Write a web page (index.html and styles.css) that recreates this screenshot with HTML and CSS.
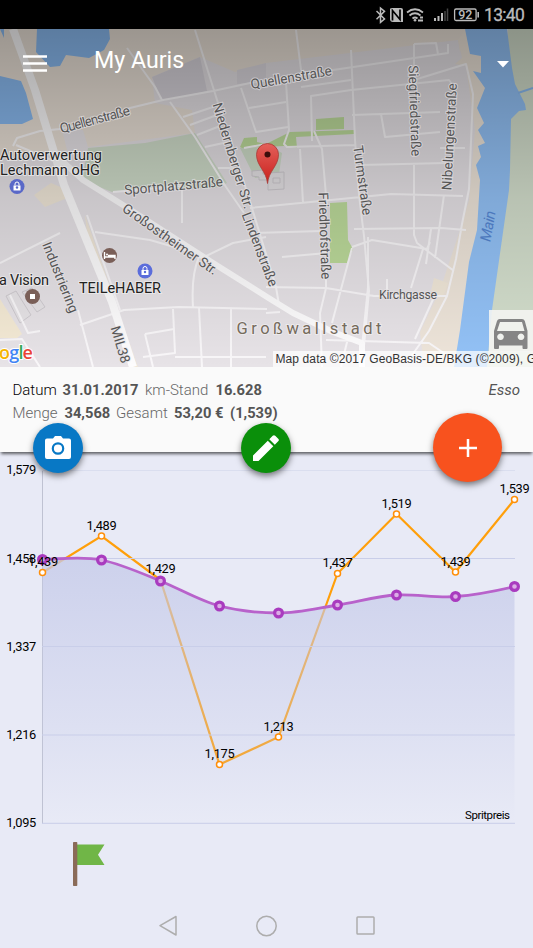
FILE: index.html
```html
<!DOCTYPE html>
<html lang="de">
<head>
<meta charset="utf-8">
<title>My Auris</title>
<link rel="stylesheet" href="styles.css">
</head>
<body>
<div class="screen">
  <div class="status">
    <svg class="status-icons" width="104" height="20" viewBox="376 5 104 20">
      <path d="M376.500 11l8 8-4 3.300V8l4 3.300-8 8" fill="none" stroke="#bbb" stroke-width="1.500"/>
      <path d="M391 8h10q2 0 2 2v12h-10q-3 0-3-3V9z" fill="#bbb"/>
      <path d="M392.500 20.500v-10l7.500 9v-10" fill="none" stroke="#000" stroke-width="1.700"/>
      <g fill="none" stroke="#bbb" stroke-width="1.700"><path d="M407 12.500q8-6.500 16 0M409.500 15.500q5.500-4.500 11 0M412.500 18.500q2.500-2 5 0"/></g>
      <circle cx="415" cy="20.300" r="1.300" fill="#bbb"/><path d="M418 20.500h5M420 17.500h3" stroke="#bbb" stroke-width="2"/>
      <path d="M435 21v-3M438.500 21v-5M442 21v-8" stroke="#bbb" stroke-width="2"/>
      <path d="M445 21V11M447.500 21V8.500" stroke="#444" stroke-width="1.500"/>
      <rect x="454.600" y="9" width="21.500" height="11.500" rx="1.500" fill="none" stroke="#bbb" stroke-width="1.300"/>
      <path d="M478.200 12v5.500" stroke="#bbb" stroke-width="1.600"/>
      <text x="465.300" y="18.800" class="battery" text-anchor="middle">92</text>
    </svg>
    <span class="clock">13:40</span>
  </div>

  <div class="map">
    <svg class="map-art" width="533" height="338" viewBox="0 29 533 338">
      <defs>
        <linearGradient id="shade" x1="0" y1="0" x2="0" y2="1">
          <stop offset="0" stop-color="#000" stop-opacity=".34"/><stop offset=".5" stop-color="#000" stop-opacity=".13"/><stop offset="1" stop-color="#000" stop-opacity="0"/>
        </linearGradient>
        <linearGradient id="pin" x1="0" y1="0" x2="0" y2="1"><stop offset="0" stop-color="#e4605a"/><stop offset="1" stop-color="#c9201c"/></linearGradient>
      </defs>
      <rect y="29" width="533" height="338" fill="#e7e3e7"/>
      <path d="M0 29H466L460 52 458 40 316 57 266 63 235 72 200 57 152 77 155 103 192 110 195 133 88 147 83 130 62 130 67 150 0 158z" fill="#ece3d9"/>
      <path d="M88 148L145 143 195 133 227 183 215 188 140 189 112 192 82 180z" fill="#d0ddca"/>
      <path d="M152 77L200 57 207 91 162 101z" fill="#d8d4db"/>
      <path d="M237 70l29-7v18l-29 3z" fill="#dedae0"/>
      <path d="M240 148h33l9 5-3 21-24 4z" fill="#cfddc9"/>
      <path d="M458 40L462 58 455 64 466 66 475 130 469 200 460 230 440 290 420 332 424 367H455L490 200V29H465z" fill="#eee5da"/>
      <path d="M508 29H533V367H485z" fill="#d4dfcd"/>
      <path d="M465 29H507L512 68 515 84 525 104 526 110 519 111 511 119 510 170 509 190 492 310 487 367H454L460 330 469 262 477 230 480 180 476 165 481 157 478 146 485 143 478 130 484 123 477 108 485 88 473 71 481 73 481 56 470 54z" fill="#93c2f7"/>
      <path d="M37 29H109L110 39 104 50 89 58 66 55 60 66 50 67 36 52zM0 76l21 5 5 12 7 26-11 5H0zM0 29h4v9z" fill="#8bbcf3"/>
      <path d="M518 93l15-5" stroke="#8bbcf3" stroke-width="2"/>
      <path d="M34 195l17-12 14 6 5 8-25 10zM85 215l53 152h-8L87 235zM434 278l14 5-5 14-12-6z" fill="#f1e8d9"/>
      <path d="M0 299l22 35-5 4H0z" fill="#f4ead5"/>
      <path d="M316 119l28-2v12l-28 1zM330 203l17-1 1 38 5 9-6 14H330zM240 147l4-9 13-1v5l9 2 24-12 64-2v4l-58 3 1 11-13-2-42 2z" fill="#bddb9b"/>
      <g fill="#e6e3e6" stroke="#cfcbd0"><path d="M6 296l10-5 15 24-11 8zM22 292l10-4 13 19-8 5zM252 171l11-1v4h5l1 6h-10v-3l-7-1zM268 173l16-1v17l-16 1z"/><path d="M273 178h7v5h-7z"/></g>

      <g class="streets">
        <path d="M13 146L17 138 40 131 60 129 90 122 130 108 163 100 213 91 250 83 333 70 448 53V44M16 145l40 17M127 48l28 39 7 13M195 30l23 73 30 92 28 92 3 18M170 102l25 35 31 50 18 26M183 117l30-10M190 125l27-10M197 135l23-9M205 147l23-5M218 168h18M244 148l22-4M241 88l15 44 32-5M249 108l37-6"/>
        <path d="M296 30l5 40M351 50l4 90 4 55 5 41 5 55-5 55-4 15M286 82l3 48-5 14 3 3 68-2M312 141l-1-45 40-6 98-10 3 4M301 87l50-7M314 131l8 18 5 58M300 149l3 54M352 115l88-3M381 114l4 23 55-5M414 44l22-1 2 11M414 44v36l52-16 7 30-4 95-7 35-6 35-9 37-18 35-21 30M414 165v70l3 8 37 28M360 165l86-2M250 208l71-7 70-7 72 2M354 229l87-1 25 2M440 148h25M431 229l-5 35M444 195l-9 63M352 247l20-7 55 9 3-7M423 249l-12 39M252 233l69-2M282 257l45-4M266 287l60 1 48 8h73M326 261v27l-6 25 2 54M352 248l-20 75M368 237v50l-6 60M387 279v15M435 295l-20 44M266 313l14-1M326 340l103 3 25 17M348 338l-7 29"/>
        <path d="M0 263l60-30M95 232l55 8 52 15M204 257l29-14 33-6M199 257q-8 18-6 50M80 325l44-15 55-3 88 2M78 310l15 57M173 309l2 44-32 4M145 334l29-5M145 334l8 33M199 308l3 59M231 309v58M175 357h91M0 340l22-1 18 28M10 295l18 38 12-2M87 215l33 95M182 190v33M113 192l69-6"/>
      </g>
      <path d="M13 29L35 90 64 185 112 302 133 367" class="road wide"/>
      <path d="M50 150L83 180 123 205 213 263 267 297 293 313 333 332 362 343V367" class="road"/>

      <rect y="29" width="533" height="338" fill="url(#shade)"/>
      <g class="labels" text-anchor="middle">
        <text transform="translate(96 124) rotate(-15)" textLength="72">Quellenstraße</text>
        <text transform="translate(292 82) rotate(-10)" textLength="82">Quellenstraße</text>
        <text transform="translate(228.500 157) rotate(73)" textLength="110">Niedernberger Str.</text>
        <text transform="translate(255.500 251) rotate(69)" textLength="78">Lindenstraße</text>
        <text transform="translate(174 190.500) rotate(-5)" textLength="99">Sportplatzstraße</text>
        <text transform="translate(167.500 243) rotate(35)" textLength="113">Großostheimer Str.</text>
        <text transform="translate(56 279) rotate(68)" textLength="75">Industriering</text>
        <text transform="translate(116 346) rotate(73)" textLength="38">MIL38</text>
        <text transform="translate(320 236) rotate(88)" textLength="87">Friedhofstraße</text>
        <text transform="translate(358 181) rotate(82)" textLength="70">Turmstraße</text>
        <text transform="translate(410 111) rotate(88)" textLength="91">Siegfriedstraße</text>
        <text transform="translate(454 137) rotate(-87)" textLength="107">Nibelungenstraße</text>
        <text x="408" y="298.500" class="small" textLength="58">Kirchgasse</text>
        <text transform="translate(493 227) rotate(-80)" class="river" textLength="31">Main</text>
        <text x="309" y="334" class="town" textLength="145">Großwallstadt</text>
      </g>
      <g class="places">
        <text x="0" y="160" textLength="102">Autoverwertung</text>
        <text x="0" y="174.500" textLength="100">Lechmann oHG</text>
        <text x="-1" y="285" textLength="50">a Vision</text>
        <text x="79" y="293" textLength="82">TEILeHABER</text>
      </g>
      <g>
        <circle cx="17" cy="186.500" r="7.500" fill="#5968c8"/><path d="M13.500 185.500h7v5h-7z" fill="#fff"/><path d="M15 185.500v-1.500a2 2 0 0 1 4 0v1.500" fill="none" stroke="#fff"/><circle cx="17" cy="187.500" r="1.200" fill="#5968c8"/>
        <circle cx="145" cy="271" r="7.500" fill="#5b6ddb"/><path d="M141.500 270h7v5h-7z" fill="#fff"/><path d="M143 270v-1.500a2 2 0 0 1 4 0v1.500" fill="none" stroke="#fff"/><circle cx="145" cy="272" r="1.200" fill="#5b6ddb"/>
        <circle cx="109.500" cy="255.500" r="7.500" fill="#7a5f58"/><path d="M104.500 252v7M104.500 257h10.500v2M108 255.500h7v2" stroke="#fff" fill="none" stroke-width="1.400"/><circle cx="107" cy="254.500" r="1" fill="#fff"/>
        <circle cx="32.500" cy="296.500" r="7.500" fill="#7a5f58"/><rect x="30" y="294" width="5" height="5" fill="#fff"/>
      </g>
      <path d="M267.500 183.500C266.500 171 256.500 166 256.500 154.500a11 11 0 0 1 22 0C278.500 166 268.500 171 267.500 183.500z" fill="url(#pin)" stroke="#a83a36" stroke-width=".8"/>
      <circle cx="267.500" cy="154.500" r="3" fill="#3d0d0b"/>
      <text y="359" x="-1" class="logo"><tspan fill="#f5b400">o</tspan><tspan fill="#4285f4">g</tspan><tspan fill="#34a853">l</tspan><tspan fill="#ea4335">e</tspan></text>
      <path d="M273 351H533v16H273z" fill="#fff" opacity=".72"/>
      <path d="M489 310H533v42H489z" fill="#f5f5f3" opacity=".88"/>
      <text x="275.500" y="363" class="credit">Map data ©2017 GeoBasis-DE/BKG (©2009), G</text>
      <path fill="#858585" fill-rule="evenodd" d="M499.500 319h22.500q2 0 2.800 2l2.700 10v17q0 1-1 1h-3q-1 0-1-1v-2.500h-23.500v2.500q0 1-1 1h-3q-1 0-1-1V331l3-10q.8-2 2.500-2zM500 322l-3 9h27.500l-2.500-9zM500.500 333.500a3.300 3.300 0 1 0 .01 0zM521 333.500a3.300 3.300 0 1 0 .01 0z"/>
    </svg>
    <header class="appbar">
      <svg width="24" height="18" viewBox="0 0 24 18"><path d="M0 1.500h24M0 8.500h24M0 15.500h24" stroke="#fff" stroke-width="2.500"/></svg>
      <h1>My Auris</h1>
      <svg class="caret" width="12" height="7" viewBox="0 0 12 7"><path d="M0 0h12L6 6.500z" fill="#fff"/></svg>
    </header>
  </div>

  <section class="card">
    <div class="line"><span class="dark w-date">Datum</span><b class="w-dval">31.01.2017</b><span class="w-km">km-Stand</span><b>16.628</b><em>Esso</em></div>
    <div class="line"><span class="w-menge">Menge</span><b class="w-mval">34,568</b><span class="w-sum">Gesamt</span><b class="w-sval">53,20 €</b><b>(1,539)</b></div>
    <button class="fab photo" aria-label="Foto"><svg width="26" height="24" viewBox="0 0 26 24"><path d="M2 2.500h6L10 0h6l2 2.500h6q2 0 2 2V21q0 2-2 2H2q-2 0-2-2V4.500q0-2 2-2z" fill="#fff"/><circle cx="13" cy="12.500" r="5.200" fill="#fff" stroke="#0878c5" stroke-width="2.200"/></svg></button>
    <button class="fab edit" aria-label="Bearbeiten"><svg width="26" height="26" viewBox="0 0 26 26"><path d="M0 20.500L14.800 5.700l5.500 5.500L5.500 26H0zM16.300 4.200L19.700.8q1.300-1.200 2.500 0l3 3q1.300 1.200 0 2.500l-3.400 3.400z" fill="#fff"/></svg></button>
    <button class="fab add" aria-label="Neu"><svg width="18" height="18" viewBox="0 0 18 18"><path d="M0 9h18M9 0v18" stroke="#fff" stroke-width="2.500"/></svg></button>
  </section>

  <svg class="chart" width="533" height="380" viewBox="0 452 533 380">
    <defs><linearGradient id="area" x1="0" y1="0" x2="0" y2="1"><stop offset="0" stop-color="#c5cae9" stop-opacity=".78"/><stop offset=".65" stop-color="#c5cae9" stop-opacity=".3"/><stop offset="1" stop-color="#c5cae9" stop-opacity="0"/></linearGradient></defs>
    <path d="M42 470.500H515" stroke="#dadeef"/>
    <path d="M42.500 471V823.500" stroke="#bfc2d2"/>
    <path d="M42.500 572.500L101.500 536 160.500 580 219.500 764.500 278.500 737 337.500 573.500 396.500 514 455.500 572 514.500 499.500" fill="none" stroke="#ff9f0a" stroke-width="2.200"/>
    <path d="M42.500 559.500C62 559 82 556 101.500 560S141 573 160.500 581 200 601 219.500 606 259 613 278.500 613 318 608 337.500 605 377 596 396.500 595 436 598 455.500 596.500 500 590 514.500 586.500V823H42.500z" fill="url(#area)"/>
    <path d="M42 558.500H515M42 646.500H515M42 735H515M42 823.300H515" stroke="#c9cee9"/>
    <path d="M42.500 559.500C62 559 82 556 101.500 560S141 573 160.500 581 200 601 219.500 606 259 613 278.500 613 318 608 337.500 605 377 596 396.500 595 436 598 455.500 596.500 500 590 514.500 586.500" fill="none" stroke="#b862cb" stroke-width="2.800"/>
    <g fill="#dcaee6" stroke="#a93bbf" stroke-width="3.200"><circle cx="42.500" cy="559.500" r="3.900"/><circle cx="101.500" cy="560" r="3.900"/><circle cx="160.500" cy="581" r="3.900"/><circle cx="219.500" cy="606" r="3.900"/><circle cx="278.500" cy="613" r="3.900"/><circle cx="337.500" cy="605" r="3.900"/><circle cx="396.500" cy="595" r="3.900"/><circle cx="455.500" cy="596.500" r="3.900"/><circle cx="514.500" cy="586.500" r="3.900"/></g>
    <g fill="#fff" stroke="#ff8f0a" stroke-width="1.500"><circle cx="42.500" cy="572.500" r="3"/><circle cx="101.500" cy="536" r="3"/><circle cx="219.500" cy="764.500" r="3"/><circle cx="278.500" cy="737" r="3"/><circle cx="337.500" cy="573.500" r="3"/><circle cx="396.500" cy="514" r="3"/><circle cx="455.500" cy="572" r="3"/><circle cx="514.500" cy="499.500" r="3"/></g>
    <g class="ticks" text-anchor="end"><text x="36" y="474">1,579</text><text x="36" y="562.500">1,458</text><text x="36" y="650.500">1,337</text><text x="36" y="739">1,216</text><text x="36" y="827">1,095</text></g>
    <g class="ticks" text-anchor="middle"><text x="43" y="566">1,439</text><text x="101.500" y="529.500">1,489</text><text x="160.500" y="573">1,429</text><text x="219.500" y="758">1,175</text><text x="278.500" y="730.500">1,213</text><text x="337.500" y="567">1,437</text><text x="396.500" y="507.500">1,519</text><text x="455.500" y="565.500">1,439</text><text x="514.500" y="493">1,539</text></g>
    <text x="465" y="818.500" class="series" textLength="45">Spritpreis</text>
  </svg>

  <div class="marker"><svg width="32" height="45" viewBox="0 0 32 45"><path d="M4 2.500H31.500L25 12.700 31.500 23H4z" fill="#70b647"/><rect width="4.300" height="44" rx=".7" fill="#8a6b58"/></svg></div>

  <nav class="nav">
    <svg width="216" height="22" viewBox="0 0 216 22"><g fill="none" stroke="#adadad" stroke-width="1.500" stroke-linejoin="round"><path d="M17 1.500v18.500L1 10.700z"/><circle cx="107.500" cy="11" r="9.700"/><rect x="198" y="2" width="17" height="17" rx=".8"/></g></svg>
  </nav>
</div>
</body>
</html>
```
FILE: styles.css
```css
* { box-sizing: border-box; }
body { margin: 0; font-family: Roboto, "Liberation Sans", sans-serif; }
.screen { width: 533px; height: 948px; display: flex; flex-direction: column; background: #e8eaf6; overflow: hidden; }
.status { height: 29px; background: #000; display: flex; justify-content: flex-end; align-items: center; gap: 4px; padding: 1px 9px 0 0; color: #bbb; }
.battery { font-size: 12.500px; font-weight: 500; fill: #bbb; }
.clock { font-size: 17.500px; width: 40px; letter-spacing: -.7px; white-space: nowrap; -webkit-text-stroke: .3px #bbb; }
.map { height: 338px; position: relative; flex: none; }
.map-art { display: block; }
.appbar { position: absolute; inset: 0 0 auto 0; height: 66px; display: flex; align-items: center; padding: 4px 24px 0 23px; color: #fff; }
.appbar h1 { margin: -8px 0 0 47px; font-size: 23.200px; font-weight: 400; line-height: 30px; }
.caret { margin-left: auto; }
.streets path { fill: none; stroke: #f9f7f9; stroke-width: 2; stroke-linejoin: round; }
.road { fill: none; stroke: #fdfcfd; stroke-width: 6; stroke-linejoin: round; }
.wide { stroke-width: 8; }
.labels text { font-size: 13.600px; fill: #555; paint-order: stroke; stroke: #e5e2e5; stroke-width: 2px; stroke-opacity: .6; }
.labels .small { font-size: 12.300px; }
.labels .river { font-size: 15px; font-style: italic; fill: #4c78bd; stroke: none; }
.labels .town { font-size: 16.500px; fill: #756b5c; stroke: #f5f3f5; }
.places text { font-size: 14.500px; fill: #222; paint-order: stroke; stroke: #eee; stroke-width: 2px; stroke-opacity: .7; }
.logo { font: 600 18px "Open Sans", sans-serif; paint-order: stroke; stroke: #fff; stroke-width: 2px; letter-spacing: -.8px; }
.credit { font: 12px "Liberation Sans", sans-serif; fill: #333; letter-spacing: .1px; }
.card { height: 85px; flex: none; position: relative; z-index: 1; background: #fafafa; box-shadow: 0 3px 3px -1px rgba(0,0,0,.6); padding: 12px 13px 0 12.500px; }
.line { height: 23px; line-height: 23px; display: flex; font-size: 15px; font-weight: 300; color: #666; white-space: nowrap; }
.line b { font-size: 14.700px; font-weight: 700; letter-spacing: 0; color: #555; }
.line em { margin-left: auto; font-weight: 400; color: #555; }
.line .dark { color: #000; }
.w-date { width: 50px; }
.w-dval { width: 82.500px; }
.w-km { width: 70.500px; }
.w-menge { width: 52px; }
.w-mval { width: 51.500px; }
.w-sum { width: 58px; }
.w-sval { width: 56px; }
.fab { position: absolute; border: 0; padding: 0; border-radius: 50%; display: flex; align-items: center; justify-content: center; width: 50px; height: 50px; top: 56px; box-shadow: 0 3px 6px rgba(0,0,0,.5); }
.photo { left: 33px; background: #0878c5; }
.edit { left: 241px; background: #0a8f0a; }
.add { left: 433px; top: 46px; width: 69px; height: 69px; background: #f8521e; }
.chart { display: block; flex: none; }
.ticks text { font-size: 12.800px; fill: #000; letter-spacing: -.3px; }
.series { font-size: 11.500px; }
.marker { height: 72px; flex: none; padding: 10px 0 0 73px; }
.nav { flex: 1; display: flex; justify-content: center; padding: 11px 0 0; }
```
